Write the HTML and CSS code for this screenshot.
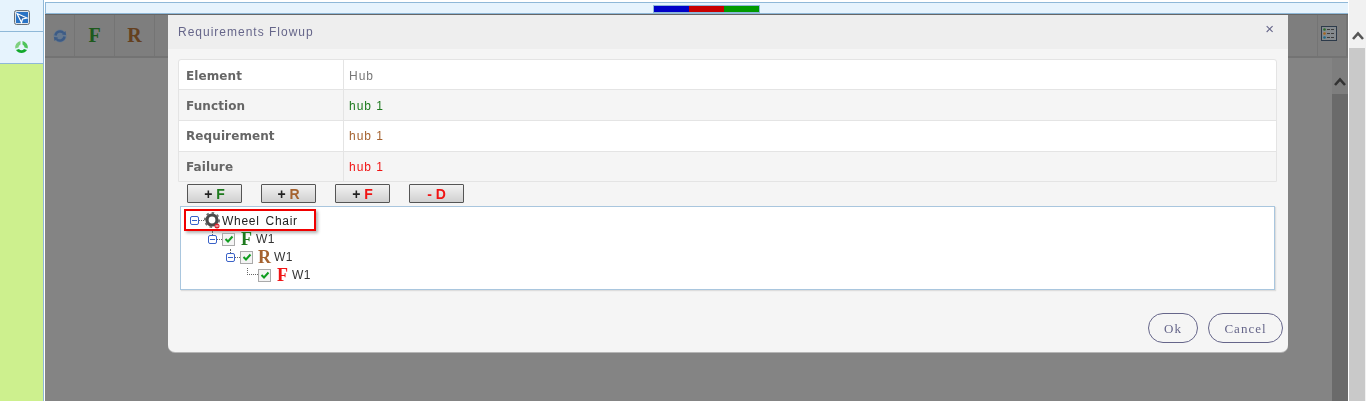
FILE: index.html
```html
<!DOCTYPE html>
<html lang="en">
<head>
    <meta charset="UTF-8">
    <title>Requirements Flowup</title>
    <link rel="stylesheet" href="styles.css">
</head>
<body>
    <div class="page">
        <div class="sidebar">
            <div class="side-item side-first">
                <svg width="16" height="15" viewBox="0 0 16 15"><rect x="0.500" y="0.500" width="15" height="14" rx="2" fill="#dfe3e8" stroke="#6a7078"/><rect x="2" y="2" width="12" height="11" fill="#2a73c5"/><path d="M3 3.500 L13 8 L8.500 9 L7.500 12.500 Z" fill="#2a62a8" stroke="#fff" stroke-width="1.200"/></svg>
            </div>
            <div class="side-item">
                <svg width="15" height="15" viewBox="0 0 15 15"><path d="M6.500 1 A6.500 6.500 0 0 0 1.200 8.500 L4.500 7.500 A3.200 3.200 0 0 1 6.500 4.500 Z" fill="#7fd07f"/><path d="M8.500 1 A6.500 6.500 0 0 1 13.800 8.500 L10.500 7.500 A3.200 3.200 0 0 0 8.500 4.500 Z" fill="#4fc45a"/><path d="M2 10 L5 9 A3.200 3.200 0 0 0 10 9 L13 10 A6.500 6.500 0 0 1 2 10 Z" fill="#12a82c"/></svg>
            </div>
            <div class="side-fill"></div>
        </div>
        <div class="main">
            <div class="topbar">
                <div class="progress"><span class="blue"></span><span class="red"></span><span class="green"></span></div>
            </div>
            <div class="toolbar">
                <div class="tool tool-sync">
                    <svg width="14" height="14" viewBox="0 0 14 14"><circle cx="7" cy="7" r="6.500" fill="#65788e"/><path d="M2.500 6.500 A4.600 4.600 0 0 1 10.500 4 M11.500 7.500 A4.600 4.600 0 0 1 3.500 10" fill="none" stroke="#3c5b86" stroke-width="2.400"/><path d="M9 5.500 L13 6 L12.500 2 Z M5 8.500 L1 8 L1.500 12 Z" fill="#3c5b86"/></svg>
                </div>
                <div class="tool tool-f">F</div>
                <div class="tool tool-r">R</div>
                <div class="tool-gap"></div>
                <div class="tool tool-list">
                    <svg width="16" height="15" viewBox="0 0 16 15"><rect x="0.500" y="0.500" width="15" height="14" fill="#858a8e" stroke="#2c3a4a"/><circle cx="3.500" cy="3.500" r="1.300" fill="#2c6b2c"/><circle cx="3.500" cy="7.500" r="1.300" fill="#a5651c"/><circle cx="3.500" cy="11.500" r="1.300" fill="#1c6a8a"/><path d="M6 3.500 H13 M6 7.500 H13 M6 11.500 H13" stroke="#3c3c3c" stroke-dasharray="3 1"/></svg>
                </div>
            </div>
            <div class="content">
                <div class="inner-scroll">
                    <svg class="chevron" width="12" height="9" viewBox="0 0 12 9"><path d="M1 8 L6 2.500 L11 8" fill="none" stroke="#333" stroke-width="2.600"/></svg>
                    <div class="inner-thumb"></div>
                </div>
            </div>
        </div>
        <div class="page-scroll">
            <svg class="chevron" width="12" height="9" viewBox="0 0 12 9"><path d="M1 8 L6 2.500 L11 8" fill="none" stroke="#555" stroke-width="2.600"/></svg>
            <div class="page-thumb"></div>
        </div>
    </div>

    <div class="dialog">
        <div class="dialog-head">
            <span class="dialog-title">Requirements Flowup</span>
            <span class="dialog-close">×</span>
        </div>
        <div class="dialog-body">
            <div class="info-table">
                <div class="info-row"><div class="info-label">Element</div><div class="info-value">Hub</div></div>
                <div class="info-row alt"><div class="info-label">Function</div><div class="info-value c-function">hub 1</div></div>
                <div class="info-row"><div class="info-label">Requirement</div><div class="info-value c-req">hub 1</div></div>
                <div class="info-row alt"><div class="info-label">Failure</div><div class="info-value c-fail">hub 1</div></div>
            </div>
            <div class="actions">
                <button class="act-btn">+ <b class="c-function">F</b></button>
                <button class="act-btn">+ <b class="c-req">R</b></button>
                <button class="act-btn">+ <b class="c-fail">F</b></button>
                <button class="act-btn c-fail">- D</button>
            </div>
            <div class="tree">
                <div class="tree-row tree-root">
                    <span class="expander"></span><span class="dots"></span>
                    <svg class="gear" width="17" height="17" viewBox="0 0 17 17">
                        <circle cx="8" cy="8" r="5" fill="none" stroke="#4a4a4a" stroke-width="3.200"/>
                        <circle cx="8" cy="8" r="7" fill="none" stroke="#6e6e6e" stroke-width="2" stroke-dasharray="2.500 2.900"/>
                        <circle cx="13" cy="14" r="2.500" fill="#d9232e"/>
                        <path d="M11.500 14 H14.500" stroke="#fff"/>
                    </svg>
                    <span class="node-text">Wheel Chair</span>
                </div>
                <div class="tree-row level-1">
                    <span class="expander linked"></span><span class="dots"></span><span class="check"><svg width="10" height="10" viewBox="0 0 10 10"><path d="M1.500 5 L4 7.500 L8.500 2.500" fill="none" stroke="#0f9d1f" stroke-width="2"/></svg></span>
                    <b class="node-mark c-function">F</b><span class="node-label">W1</span>
                </div>
                <div class="tree-row level-2">
                    <span class="expander linked"></span><span class="dots"></span><span class="check"><svg width="10" height="10" viewBox="0 0 10 10"><path d="M1.500 5 L4 7.500 L8.500 2.500" fill="none" stroke="#0f9d1f" stroke-width="2"/></svg></span>
                    <b class="node-mark c-req">R</b><span class="node-label">W1</span>
                </div>
                <div class="tree-row level-3">
                    <span class="elbow"></span><span class="check"><svg width="10" height="10" viewBox="0 0 10 10"><path d="M1.500 5 L4 7.500 L8.500 2.500" fill="none" stroke="#0f9d1f" stroke-width="2"/></svg></span>
                    <b class="node-mark c-fail">F</b><span class="node-label">W1</span>
                </div>
            </div>
            <div class="dialog-foot">
                <button class="pill pill-ok">Ok</button>
                <button class="pill pill-cancel">Cancel</button>
            </div>
        </div>
    </div>
</body>
</html>
```
FILE: styles.css
```css
* {
    box-sizing: border-box;
    margin: 0;
    padding: 0;
}

html, body {
    height: 100%;
    overflow: hidden;
}

body {
    font-family: 'Liberation Sans', Arial, sans-serif;
    background-color: #fff;
    color: #333;
}

.page {
    display: flex;
    height: 401px;
}

.sidebar {
    width: 44px;
    flex-shrink: 0;
    display: flex;
    flex-direction: column;
    border-right: 1px solid #8fb8d8;
}

.side-item {
    height: 32px;
    display: flex;
    justify-content: center;
    align-items: center;
    background-color: #e6f3fd;
    border-bottom: 1px solid #8fb8d8;
}

.side-first {
    padding-top: 4px;
}

.side-fill {
    flex: 1;
    background-color: #cdf08e;
}

.main {
    width: 1304px;
    margin-left: 1px;
    display: flex;
    flex-direction: column;
}

.topbar {
    height: 12px;
    margin-top: 2px;
    background-color: #e6f3fd;
    border: 1px solid #8fb8d8;
    border-right: none;
}

.progress {
    width: 107px;
    height: 8px;
    margin: 2px 0 0 607px;
    border: 1px solid #8fb8d8;
    display: flex;
}

.progress span {
    flex: 1;
}

.blue { background-color: #0000c8; }
.red { background-color: #c80000; }
.green { background-color: #009a00; }

.toolbar {
    height: 44px;
    background-color: #7e7e7e;
    border-top: 1px solid #666;
    border-bottom: 2px solid #737373;
    display: flex;
}

.tool {
    width: 40px;
    display: flex;
    justify-content: center;
    align-items: center;
    border-right: 1px solid #747474;
    font-family: 'Liberation Serif', serif;
    font-size: 20px;
    font-weight: bold;
}

.tool-sync {
    width: 30px;
}

.tool-f { color: #1d5a1d; }
.tool-r { color: #64401f; }

.tool-gap {
    flex: 1;
    border-right: 1px solid #747474;
}

.tool-list {
    width: 30px;
    border-right: 2px solid #747474;
    justify-content: flex-start;
    padding: 0 0 5px 3px;
}

.content {
    flex: 1;
    background-color: #848484;
    display: flex;
    justify-content: flex-end;
}

.inner-scroll {
    width: 16px;
    background-color: #7e7e7e;
    display: flex;
    flex-direction: column;
    align-items: center;
}

.inner-scroll .chevron {
    margin-top: 19px;
}

.inner-thumb {
    flex: 1;
    align-self: stretch;
    margin-top: 8px;
    background-color: #6a6a6a;
}

.page-scroll {
    width: 17px;
    margin-left: 1px;
    display: flex;
    flex-direction: column;
    align-items: center;
    background-color: #f1f1f1;
}

.page-scroll .chevron {
    margin-top: 31px;
}

.page-thumb {
    flex: 1;
    align-self: stretch;
    margin: 8px 1px 0 0;
    background-color: #c9c9c9;
}

/* modal sits over the page */
.dialog {
    position: absolute;
    left: 168px;
    top: 14px;
    width: 1120px;
    height: 338px;
    background-color: #f5f5f5;
    border-top: 1px solid #666;
    border-radius: 0 0 7px 7px;
    box-shadow: 0 1px 0 #b5b5b5;
    will-change: transform;
}

.dialog-head {
    height: 34px;
    background-color: #eee;
    display: flex;
    justify-content: space-between;
    align-items: center;
    padding: 0 14px 1px 10px;
}

.dialog-title {
    font-size: 12px;
    letter-spacing: 1px;
    color: #66668a;
}

.dialog-close {
    font-size: 15px;
    color: #66668a;
    margin-top: -7px;
}

.dialog-body {
    padding: 10px 10px 0 10px;
}

.info-table {
    width: 1099px;
    background-color: #fff;
    border: 1px solid #e4e4e4;
    border-radius: 3px 3px 0 0;
}

.info-row {
    display: flex;
    height: 31px;
    border-bottom: 1px solid #e4e4e4;
    font-size: 12px;
    letter-spacing: 1px;
}

.info-row:first-child {
    height: 30px;
}

.info-row:last-child {
    height: 29px;
    border-bottom: none;
}

.info-row.alt {
    background-color: #f5f5f5;
}

.info-label {
    width: 165px;
    padding-left: 7px;
    border-right: 1px solid #e4e4e4;
    font-family: 'DejaVu Sans', sans-serif;
    font-size: 12px;
    font-weight: bold;
    letter-spacing: 0.1px;
    color: #666;
    display: flex;
    align-items: center;
}

.info-row:nth-child(-n+2) .info-label,
.info-row:nth-child(-n+2) .info-value {
    padding-top: 1px;
}

.info-row:first-child .info-label,
.info-row:first-child .info-value {
    padding-top: 2px;
}

.info-value {
    padding-left: 5px;
    color: #777;
    display: flex;
    align-items: center;
}

.c-function { color: #1e7a1e; }
.c-req { color: #a5622f; }
.c-fail { color: #f01414; }

.info-value.c-function { color: #1e7a1e; }
.info-value.c-req { color: #a5622f; }
.info-value.c-fail { color: #f01414; }

.actions {
    display: flex;
    gap: 19px;
    height: 24px;
    padding: 2px 0 0 9px;
}

.act-btn {
    width: 55px;
    height: 19px;
    border: 1px solid #555;
    border-radius: 1px;
    background: linear-gradient(#f2f2f2, #d0d0d0);
    font-family: 'Liberation Sans', Arial, sans-serif;
    font-size: 14px;
    font-weight: bold;
    color: #222;
}

.act-btn.c-fail {
    color: #f01414;
}

.tree {
    width: 1095px;
    height: 84px;
    margin-left: 2px;
    background-color: #fff;
    border: 1px solid #a9c6de;
    box-shadow: 1px 1px 1px #ddd;
    padding: 2px 0 0 3px;
    font-size: 12px;
}

.tree-row {
    display: flex;
    align-items: center;
    height: 18px;
}

.tree-root {
    width: 132px;
    height: 22px;
    padding-left: 4px;
    margin-bottom: -1px;
    border: 2px solid #f00000;
    box-shadow: 2px 2px 3px rgba(0, 0, 0, 0.3);
}

.level-1 { padding-left: 24px; }
.level-2 { padding-left: 42px; }
.level-3 { padding-left: 63px; }

.expander {
    position: relative;
    width: 9px;
    height: 9px;
    border: 1px solid #3a62c8;
    border-radius: 2px;
    background-color: #fff;
}

.expander::after {
    content: "";
    position: absolute;
    left: 1px;
    right: 1px;
    top: 3px;
    border-top: 1px solid #3a62c8;
}

.expander.linked::before {
    content: "";
    position: absolute;
    left: 3px;
    top: -5px;
    height: 4px;
    border-left: 1px dotted #666;
}

.dots {
    width: 5px;
    border-top: 1px dotted #666;
}

.elbow {
    width: 11px;
    height: 7px;
    margin-top: -7px;
    border-left: 1px dotted #666;
    border-bottom: 1px dotted #666;
}

.check {
    width: 13px;
    height: 13px;
    border: 1px solid #aaa;
    background-color: #f4f4f4;
    display: flex;
    justify-content: center;
    align-items: center;
}

.gear {
    margin-top: 1px;
}

.node-text {
    margin: 2px 0 0 1px;
    font-size: 12px;
    letter-spacing: 0.7px;
    word-spacing: 2px;
    color: #222;
}

.node-mark {
    width: 14px;
    margin-left: 6px;
    font-family: 'Liberation Serif', serif;
    font-size: 18px;
    line-height: 18px;
}

.level-2 .node-mark {
    margin-left: 5px;
    width: 15px;
}

.node-label {
    margin-left: 1px;
    font-size: 12px;
    letter-spacing: 0.4px;
    color: #333;
}

.dialog-foot {
    display: flex;
    justify-content: flex-end;
    gap: 10px;
    margin: 23px -5px 0 0;
}

.pill {
    height: 30px;
    padding-top: 1px;
    background-color: transparent;
    border: 1px solid #66668a;
    border-radius: 15px;
    font-family: 'Liberation Serif', serif;
    font-size: 13px;
    letter-spacing: 1px;
    color: #66668a;
}

.pill-ok { width: 50px; }
.pill-cancel { width: 75px; }
```
